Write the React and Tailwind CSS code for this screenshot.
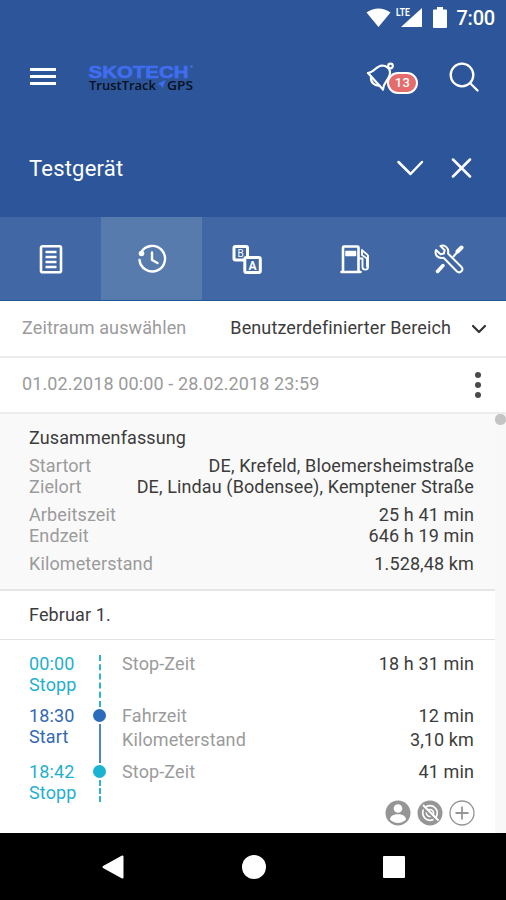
const SUMMARY = [
  [
    { label: 'Startort', value: 'DE, Krefeld, Bloemersheimstraße' },
    { label: 'Zielort', value: 'DE, Lindau (Bodensee), Kemptener Straße' },
  ],
  [
    { label: 'Arbeitszeit', value: '25 h 41 min' },
    { label: 'Endzeit', value: '646 h 19 min' },
  ],
  [{ label: 'Kilometerstand', value: '1.528,48 km' }],
];

function StatusBar() {
  return (
    <div className="flex h-[35px] items-center justify-end pr-[11px] text-white">
      <svg className="h-[22px] w-[76px]" viewBox="0 0 76 22" fill="currentColor">
        <path d="M0.5 5.500Q12.500 -2.500 24.500 5.500L12.500 20Z" />
        <path d="M56 1V20H35Z" />
        <text x="30" y="9" textLength="14" lengthAdjust="spacingAndGlyphs" className="font-['Roboto',sans-serif] text-[10px] font-bold">LTE</text>
      </svg>
      <svg className="mr-[9px] ml-[-9px] h-[22px] w-[14px]" viewBox="0 0 14 22" fill="currentColor">
        <path d="M4 0h6v2.500h3q1 0 1 1V20q0 1-1 1H1q-1 0-1-1V3.500q0-1 1-1h3z" />
      </svg>
      <span className="text-[20px] leading-none font-medium tracking-[-0.2px]">7:00</span>
    </div>
  );
}

function Logo() {
  return (
    <svg className="ml-[32px] h-[36px] w-[108px] tracking-normal" viewBox="0 0 108 36">
      <text x="0.5" y="18.500" fill="#416df0" stroke="#416df0" strokeWidth="0.6" textLength="100" lengthAdjust="spacingAndGlyphs" className="font-['Liberation_Sans',sans-serif] text-[17px] font-bold">SKOTECH</text>
      <circle cx="103.500" cy="7.500" r="1.300" fill="#416df0" />
      <text x="1" y="31" fill="#07101f" textLength="67" lengthAdjust="spacingAndGlyphs" className="font-['Open_Sans',sans-serif] text-[13px] font-semibold">TrustTrack</text>
      <path d="M69.500 25l8-4-3 8-2-3z" fill="#416df0" />
      <text x="79" y="31" fill="#07101f" textLength="26" lengthAdjust="spacingAndGlyphs" className="font-['Open_Sans',sans-serif] text-[13px] font-semibold">GPS</text>
    </svg>
  );
}

function AppBar() {
  return (
    <div className="flex h-[85px] items-center pr-[27px] pb-[2px] pl-[30px] text-white">
      <div className="flex h-[17px] w-[26px] flex-col justify-between">
        <span className="h-[3px] bg-white" />
        <span className="h-[3px] bg-white" />
        <span className="h-[3px] bg-white" />
      </div>
      <Logo />
      <div className="flex-1" />
      <div className="relative h-[30px] w-[52px]">
        <svg className="h-[30px] w-[32px]" viewBox="0 0 32 30" fill="none" stroke="currentColor" strokeWidth="2.200" strokeLinecap="round" strokeLinejoin="round">
          <path d="M2 11C8 10.500 10 4 16 3.500c2.500 0 4 .5 5.500 2 2.500 2 3 5 2 8-1.500 5-6 7-6.500 14" />
          <path d="M2 11L17 27.500" />
          <path d="M5 15c-.5 5 3 9 8.500 8.500" />
          <circle cx="24.500" cy="4" r="2.300" />
        </svg>
        <span className="absolute top-[10px] left-[21px] flex h-[22px] w-[31px] items-center justify-center rounded-full border-2 border-white bg-[#e46c6c] text-[13px] leading-none font-medium tracking-[0.3px]">13</span>
      </div>
      <svg className="ml-[31px] h-[30px] w-[30px]" viewBox="0 0 30 30" fill="none" stroke="currentColor" strokeWidth="2.300" strokeLinecap="round">
        <circle cx="13" cy="13" r="11.300" />
        <path d="M21 21l7.500 7.500" />
      </svg>
    </div>
  );
}

function DeviceBar() {
  return (
    <div className="flex h-[97px] items-center pr-[34px] pl-[29px] text-white">
      <h1 className="flex-1 text-[22px] leading-none tracking-[0.2px]">Testgerät</h1>
      <div className="flex items-center pb-[2px]">
        <svg className="h-[16px] w-[28px]" viewBox="0 0 28 16" fill="none" stroke="currentColor" strokeWidth="2.500" strokeLinecap="round" strokeLinejoin="round">
          <path d="M2.500 2L14.500 14 26 2" />
        </svg>
        <svg className="ml-[26px] h-[20px] w-[22px]" viewBox="0 0 22 20" fill="none" stroke="currentColor" strokeWidth="2.500" strokeLinecap="round">
          <path d="M3 1.500l17 17M20 1.500l-17 17" />
        </svg>
      </div>
    </div>
  );
}

function ReportIcon() {
  return (
    <svg className="h-[30px] w-[30px]" viewBox="0 0 30 30" fill="none" stroke="currentColor" strokeWidth="2.600">
      <rect x="5" y="2.300" width="20" height="26" rx="1.500" />
      <path d="M9.500 8h11M9.500 13h11M9.500 18h11M9.500 23h11" strokeWidth="2.300" />
    </svg>
  );
}

function HistoryIcon() {
  return (
    <svg className="h-[30px] w-[30px]" viewBox="0 0 30 30" fill="none" stroke="currentColor" strokeWidth="2.400" strokeLinecap="round" strokeLinejoin="round">
      <path d="M4 8.500A12.800 12.800 0 1 1 2.500 16" />
      <circle cx="4.500" cy="9.500" r="2.800" fill="currentColor" stroke="none" />
      <path d="M15 8.500V16l5.500 3" />
    </svg>
  );
}

function SwapIcon() {
  return (
    <svg className="mr-[13px] h-[30px] w-[30px]" viewBox="0 0 30 30" fill="none" stroke="currentColor">
      <rect x="2" y="2.500" width="13.500" height="13.500" rx="1.500" strokeWidth="3" />
      <text x="5.500" y="13" fill="currentColor" stroke="none" className="text-[10px] font-normal">B</text>
      <rect x="12.800" y="13.500" width="15.500" height="15" rx="1.500" fill="#4168a4" strokeWidth="3" />
      <text x="16.400" y="25.500" fill="currentColor" stroke="none" className="text-[12px] font-bold">A</text>
    </svg>
  );
}

function FuelIcon() {
  return (
    <svg className="h-[30px] w-[32px]" viewBox="0 0 32 30" fill="none" stroke="currentColor" strokeWidth="2.600" strokeLinejoin="round" strokeLinecap="round">
      <path d="M5 27V3.500q0-1 1-1h13.500q1 0 1 1V27" />
      <path d="M3.500 28h19" />
      <path d="M8 7.500h9.500v4H8z" strokeWidth="1.500" fill="currentColor" />
      <path d="M21 14.500h3.500v8.500c0 3.500 5.500 3.500 5.500 0V12c0-2.500-4-3-6-6" strokeWidth="1.900" />
      <path d="M24 7v4l5 3.500v8" strokeWidth="1.900" />
    </svg>
  );
}

function ToolsIcon() {
  return (
    <svg className="mr-[12px] h-[30px] w-[30px]" viewBox="0 0 30 30" fill="none" stroke="currentColor" strokeWidth="2" strokeLinecap="round" strokeLinejoin="round">
      <path d="M6.500 2l4.200 4.200-.8 3.300-3.300.8L2 6C.3 11 4 15 9.500 13.800L23 27.500c3.200 2.500 7-1.500 4.500-4.500L14 9.500C15.300 4 11 .5 6.500 2z" />
      <path d="M19.500 12.500l3.500-4" strokeWidth="2" />
      <path d="M23.500 7.500l4-4" strokeWidth="4" />
      <path d="M3.500 27.500l5.500-6" strokeWidth="3.500" />
    </svg>
  );
}

const TABS = [
  { id: 'report', icon: ReportIcon },
  { id: 'history', icon: HistoryIcon, active: true },
  { id: 'swap', icon: SwapIcon },
  { id: 'fuel', icon: FuelIcon },
  { id: 'tools', icon: ToolsIcon },
];

function Tabs() {
  return (
    <div className="flex h-[84px] border-b border-[#205598] bg-[#4168a4] text-white">
      {TABS.map(({ id, icon: Icon, active }) => (
        <button key={id} className={`flex flex-1 items-center justify-center ${active ? 'bg-[#587bae]' : ''}`}>
          <Icon />
        </button>
      ))}
    </div>
  );
}

function Row({ label, value }) {
  return (
    <div className="flex justify-between">
      <span className="text-[#9b9b9b]">{label}</span>
      <span>{value}</span>
    </div>
  );
}

function Dashes({ className }) {
  return <div className={`w-0 border-l-2 border-dashed border-[#2eb2d2] ${className}`} />;
}

function Timeline() {
  return (
    <div className="flex h-[192px] pt-[13px] pr-[21px] pl-[29px]">
      <div className="w-[60px] text-[#1fafcf]">
        <div>00:00<br />Stopp</div>
        <div className="mt-[10px] text-[#3468b4]">18:30<br />Start</div>
        <div className="mt-[14px]">18:42<br />Stopp</div>
      </div>
      <div className="flex w-[21px] flex-col items-center pt-[2px]">
        <Dashes className="h-[52px]" />
        <span className="my-[2px] size-[13px] rounded-full bg-[#2b6cbc]" />
        <div className="h-[39px] w-[2px] bg-[#5085c8]" />
        <span className="my-[2px] size-[13px] rounded-full bg-[#1cb2d2]" />
        <Dashes className="h-[22px]" />
      </div>
      <div className="flex-1 pl-[12px]">
        <Row label="Stop-Zeit" value="18 h 31 min" />
        <div className="mt-[31px]"><Row label="Fahrzeit" value="12 min" /></div>
        <div className="mt-[3px]"><Row label="Kilometerstand" value="3,10 km" /></div>
        <div className="mt-[11px]"><Row label="Stop-Zeit" value="41 min" /></div>
        <div className="mt-[18px] mr-[-1px] flex justify-end gap-[6px] text-[#959595]">
          <svg className="size-[26px]" viewBox="0 0 26 26">
            <circle cx="13" cy="13" r="12.500" fill="currentColor" />
            <circle cx="13" cy="8.500" r="4.300" fill="white" />
            <path d="M5 19.500c0-7 16-7 16 0-4 4.500-12 4.500-16 0z" fill="white" />
          </svg>
          <svg className="size-[26px]" viewBox="0 0 26 26" fill="none" stroke="white" strokeWidth="1.700">
            <circle cx="13" cy="13" r="12.500" fill="currentColor" stroke="none" />
            <circle cx="13" cy="13" r="7.300" />
            <circle cx="13" cy="13" r="3.500" />
            <path d="M4.500 6L20 21.500" stroke="currentColor" strokeWidth="2" />
            <path d="M6 5l15.500 15.500" strokeWidth="2" />
          </svg>
          <svg className="size-[26px]" viewBox="0 0 26 26" fill="none" stroke="currentColor">
            <circle cx="13" cy="13" r="12" strokeWidth="1.300" />
            <path d="M13 6.500v13M6.500 13h13" strokeWidth="1.800" />
          </svg>
        </div>
      </div>
    </div>
  );
}

function NavBar() {
  return (
    <div className="flex h-[67px] items-center justify-between bg-black pr-[101px] pl-[102px] text-white">
      <svg className="h-[24px] w-[22px]" viewBox="0 0 22 24" fill="currentColor" stroke="currentColor" strokeWidth="2" strokeLinejoin="round">
        <path d="M20.500 1.500v21L1.500 12z" />
      </svg>
      <span className="size-[24px] rounded-full bg-white" />
      <span className="size-[22px] rounded-[1px] bg-white" />
    </div>
  );
}

export default function App() {
  return (
    <div className="flex h-[900px] w-[506px] flex-col overflow-hidden bg-white font-['Roboto',sans-serif] text-[18px] leading-[21px] tracking-[0.12px] text-[#3c3c3c]">
      <header className="bg-[#2c5699]">
        <StatusBar />
        <AppBar />
        <DeviceBar />
        <Tabs />
      </header>

      {/* Period filter */}
      <div className="flex h-[57px] items-center border-b-2 border-[#ececec] pr-[19px] pb-[3px] pl-[22px]">
        <span className="flex-1 text-[#9b9b9b]">Zeitraum auswählen</span>
        <span>Benutzerdefinierter Bereich</span>
        <svg className="mt-[4px] ml-[20px] h-[10px] w-[16px]" viewBox="0 0 16 10" fill="none" stroke="#333333" strokeWidth="2.200" strokeLinecap="round" strokeLinejoin="round">
          <path d="M2 2l6 6 6-6" />
        </svg>
      </div>
      <div className="flex h-[56px] items-center justify-between border-b-2 border-[#ececec] pr-[25px] pl-[22px]">
        <span className="pb-[4px] text-[#9b9b9b]">01.02.2018 00:00 - 28.02.2018 23:59</span>
        <div className="flex flex-col gap-[4px]">
          <span className="size-[6px] rounded-full bg-[#4a4a4a]" />
          <span className="size-[6px] rounded-full bg-[#4a4a4a]" />
          <span className="size-[6px] rounded-full bg-[#4a4a4a]" />
        </div>
      </div>

      <main className="flex h-[419px]">
        <div className="flex-1">
          <section className="h-[177px] border-b-2 border-[#e6e6e6] bg-[#f9f9f9] pt-[13px] pr-[21px] pl-[29px]">
            <h2>Zusammenfassung</h2>
            {SUMMARY.map((group, i) => (
              <div key={i} className="mt-[7px]">
                {group.map(r => <Row key={r.label} {...r} />)}
              </div>
            ))}
          </section>
          <div className="flex h-[49px] items-center border-b border-[#e2e2e2] pb-[2px] pl-[29px]">Februar 1.</div>
          <Timeline />
        </div>
        <div className="w-[11px] bg-[#f8f8f8]">
          <div className="h-[11px] rounded-[5px] bg-[#c4c4c4]" />
        </div>
      </main>

      <NavBar />
    </div>
  );
}
